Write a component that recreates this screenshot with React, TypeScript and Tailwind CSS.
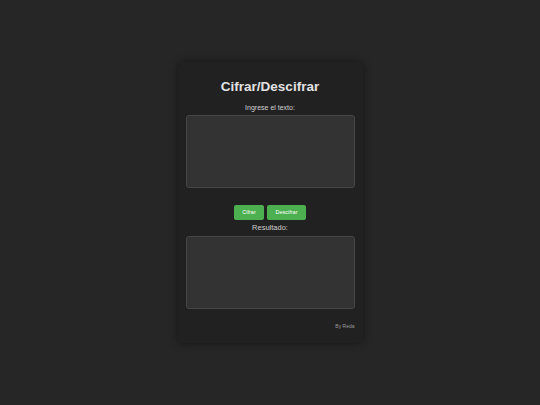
import React, { useState } from 'react';

const App: React.FC = () => {
  const [texto, setTexto] = useState('');
  const [resultado, setResultado] = useState('');

  const cifrar = () => setResultado(btoa(unescape(encodeURIComponent(texto))));
  const descifrar = () => {
    try {
      setResultado(decodeURIComponent(escape(atob(texto))));
    } catch {
      setResultado('');
    }
  };

  return (
    <div className="flex min-h-screen items-center justify-center bg-[#262626] font-['Liberation_Sans',Arial,sans-serif]">
      <div className="flex w-[185px] flex-col items-center rounded-[6px] bg-[#212121] px-2 pt-4 pb-[14px] shadow-[0_0_8px_rgba(0,0,0,0.45)]">
        <h1 className="text-[13.5px] leading-[17px] font-bold text-[#e2e2e2]">Cifrar/Descifrar</h1>

        <label className="mt-[8px] text-[7px] leading-[9px] text-[#cfcfcf]">Ingrese el texto:</label>
        <textarea
          value={texto}
          onChange={(e) => setTexto(e.target.value)}
          className="mt-[3px] h-[73px] w-full resize-none rounded-[3px] border border-[#464646] bg-[#333333] p-1 text-[7px] text-[#ddd] outline-none"
        />

        <div className="mt-[17px] flex gap-[3px]">
          <button
            onClick={cifrar}
            className="h-[15px] w-[30px] rounded-[2px] bg-[#4caf50] text-[5.5px] text-white"
          >
            Cifrar
          </button>
          <button
            onClick={descifrar}
            className="h-[15px] w-[39px] rounded-[2px] bg-[#4caf50] text-[5.5px] text-white"
          >
            Descifrar
          </button>
        </div>

        <label className="mt-[3px] text-[7.5px] leading-[9px] text-[#cfcfcf]">Resultado:</label>
        <textarea
          value={resultado}
          readOnly
          className="mt-[4px] h-[73px] w-full resize-none rounded-[3px] border border-[#464646] bg-[#333333] p-1 text-[7px] text-[#ddd] outline-none"
        />

        <p className="mt-[14px] self-end text-[5px] leading-[6px] text-[#9a9a9a]">By Reda</p>
      </div>
    </div>
  );
};

export default App;
